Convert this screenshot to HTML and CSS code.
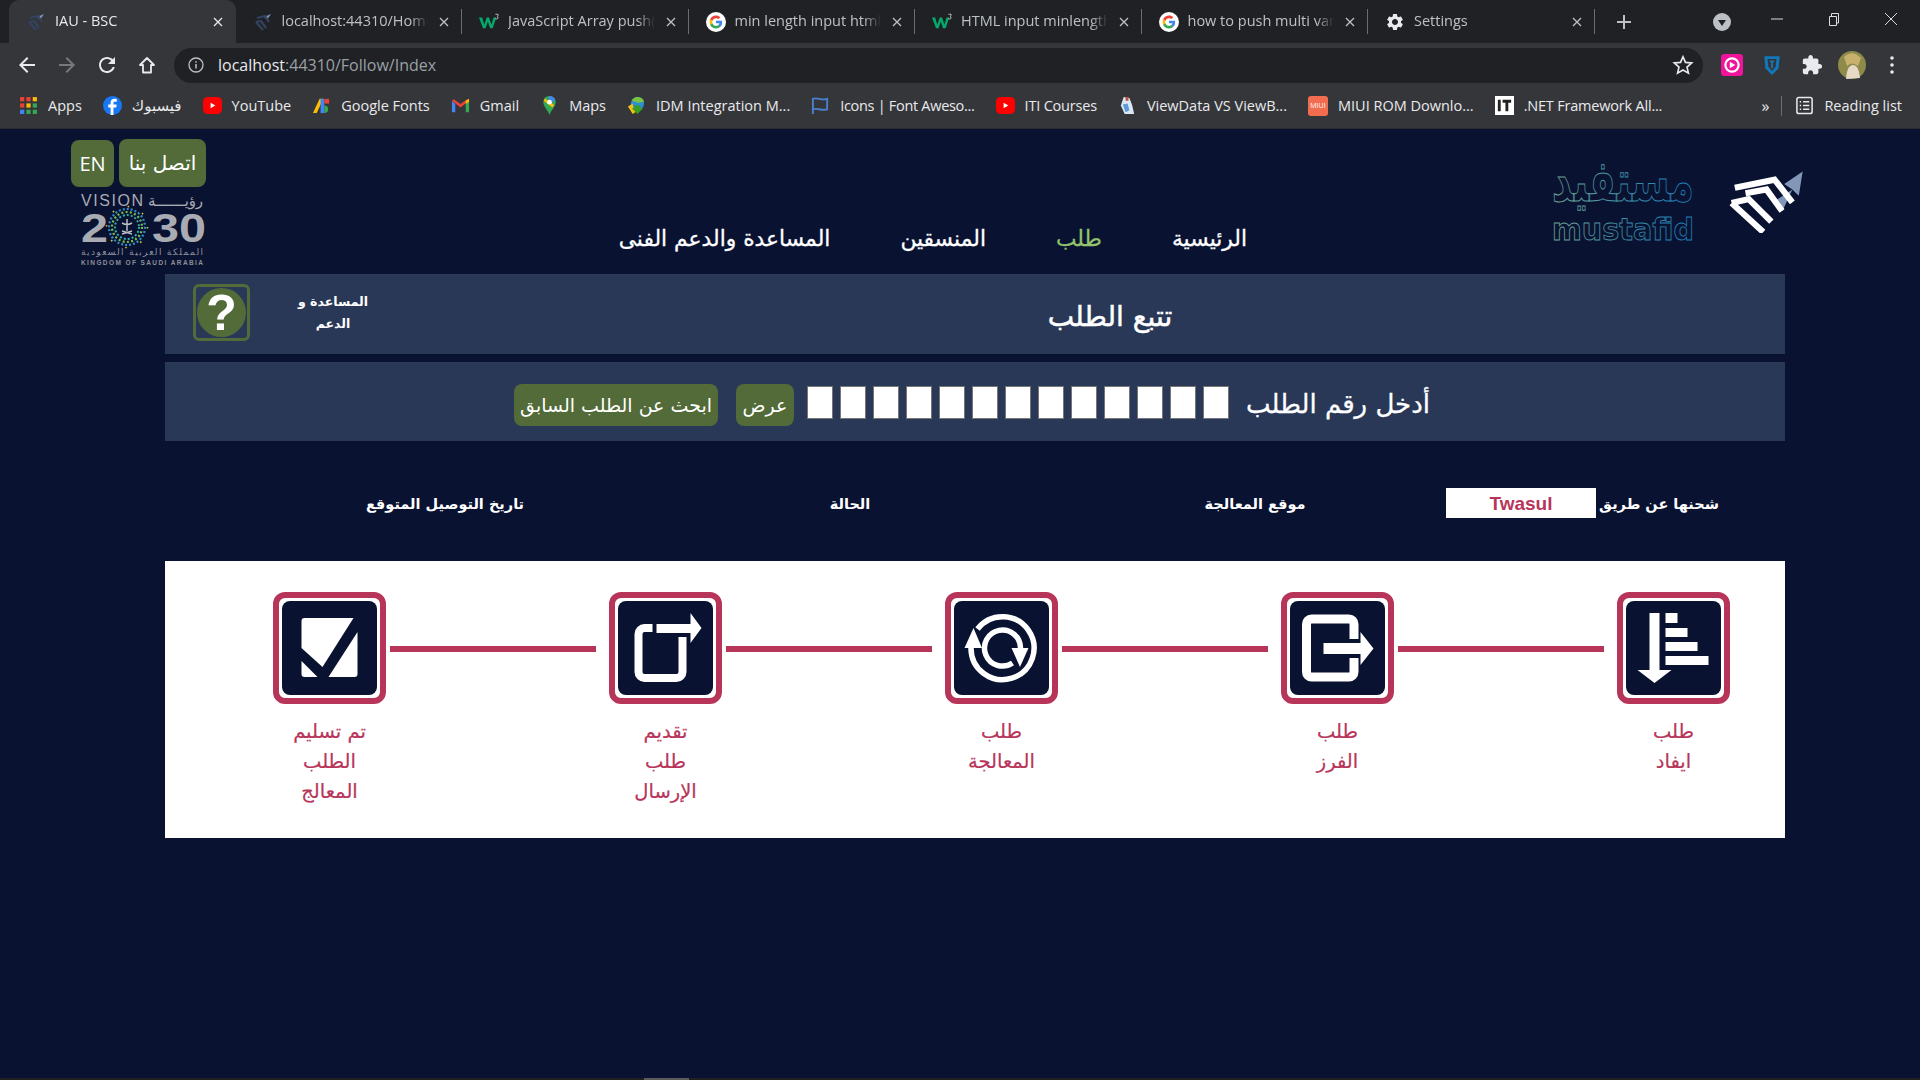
FILE: index.html
```html
<!DOCTYPE html>
<html lang="ar">
<head>
    <meta charset="UTF-8">
    <meta name="viewport" content="width=device-width, initial-scale=1.0">
    <title>IAU - BSC</title>
    <link rel="stylesheet" href="styles.css">
</head>
<body>
    <svg class="defs" width="0" height="0">
        <symbol id="i-x" viewBox="0 0 12 12"><path d="M2 2l8 8M10 2l-8 8" stroke="currentColor" stroke-width="1.3" fill="none"/></symbol>
        <symbol id="i-google" viewBox="0 0 24 24">
            <circle cx="12" cy="12" r="12" fill="#fff"/>
            <g transform="translate(3.6 3.6) scale(.7)">
                <path fill="#4285F4" d="M22.56 12.25c0-.78-.07-1.53-.2-2.25H12v4.26h5.92c-.26 1.37-1.04 2.53-2.21 3.31v2.77h3.57c2.08-1.92 3.28-4.74 3.28-8.09z"/>
                <path fill="#34A853" d="M12 23c2.97 0 5.46-.98 7.28-2.66l-3.57-2.77c-.98.66-2.23 1.06-3.71 1.06-2.86 0-5.29-1.93-6.16-4.53H2.18v2.84C3.99 20.53 7.7 23 12 23z"/>
                <path fill="#FBBC05" d="M5.84 14.09c-.22-.66-.35-1.36-.35-2.09s.13-1.43.35-2.09V7.07H2.18C1.43 8.55 1 10.22 1 12s.43 3.45 1.18 4.93l2.85-2.22.81-.62z"/>
                <path fill="#EA4335" d="M12 5.38c1.62 0 3.06.56 4.21 1.64l3.15-3.15C17.45 2.09 14.97 1 12 1 7.7 1 3.99 3.47 2.18 7.07l3.66 2.84c.87-2.6 3.3-4.53 6.16-4.53z"/>
            </g>
        </symbol>
        <symbol id="i-plane" viewBox="0 0 20 20">
            <path d="M18 2L11 5l3 3z" fill="#7f93b8"/>
            <path d="M4 6l8-2 4 6M3 10l5-1 5 7M3 10l7 8" stroke="#33425f" stroke-width="2.2" fill="none"/>
        </symbol>
        <symbol id="i-w3" viewBox="0 0 22 20">
            <path d="M0 5h3.500l2.300 8L8.500 5h2.500l2.700 8 2.200-8H19l-4 12h-2.800L9.700 9.500 7.200 17H4.400z" fill="#04aa6d"/>
            <path d="M18 1.500h3v1.500l-1.200 1c.8.2 1.200.7 1.200 1.300 0 1-.8 1.400-1.600 1.400-.6 0-1.200-.2-1.500-.5" fill="none" stroke="#e8eaed" stroke-width=".8"/>
        </symbol>
        <symbol id="i-yt" viewBox="0 0 20 20">
            <rect y="1" width="20" height="18" rx="5" fill="#f00"/>
            <path d="M8 7l5 3-5 3z" fill="#fff"/>
        </symbol>
    </svg>

    <!-- browser window top -->
    <div class="tabstrip">
        <div class="tab active">
            <svg class="tab-icon"><use href="#i-plane"/></svg>
            <span class="tab-title">IAU - BSC</span>
            <svg class="tab-close"><use href="#i-x"/></svg>
        </div>
        <div class="tab">
            <svg class="tab-icon"><use href="#i-plane"/></svg>
            <span class="tab-title">localhost:44310/Home/Index</span>
            <svg class="tab-close"><use href="#i-x"/></svg>
        </div>
        <div class="tab">
            <svg class="tab-icon"><use href="#i-w3"/></svg>
            <span class="tab-title">JavaScript Array push() Method</span>
            <svg class="tab-close"><use href="#i-x"/></svg>
        </div>
        <div class="tab">
            <svg class="tab-icon"><use href="#i-google"/></svg>
            <span class="tab-title">min length input html - Google</span>
            <svg class="tab-close"><use href="#i-x"/></svg>
        </div>
        <div class="tab">
            <svg class="tab-icon"><use href="#i-w3"/></svg>
            <span class="tab-title">HTML input minlength Attribute</span>
            <svg class="tab-close"><use href="#i-x"/></svg>
        </div>
        <div class="tab">
            <svg class="tab-icon"><use href="#i-google"/></svg>
            <span class="tab-title">how to push multi variables</span>
            <svg class="tab-close"><use href="#i-x"/></svg>
        </div>
        <div class="tab last">
            <svg class="tab-icon" viewBox="0 0 24 24"><path fill="#e8eaed" d="M19.14 12.94c.04-.3.06-.61.06-.94 0-.32-.02-.64-.07-.94l2.03-1.58c.18-.14.23-.41.12-.61l-1.92-3.32c-.12-.22-.37-.29-.59-.22l-2.39.96c-.5-.38-1.03-.7-1.62-.94l-.36-2.54c-.04-.24-.24-.41-.48-.41h-3.84c-.24 0-.43.17-.47.41l-.36 2.54c-.59.24-1.13.57-1.62.94l-2.39-.96c-.22-.08-.47 0-.59.22L2.74 8.87c-.12.21-.08.47.12.61l2.03 1.58c-.05.3-.09.63-.09.94s.02.64.07.94l-2.03 1.58c-.18.14-.23.41-.12.61l1.92 3.32c.12.22.37.29.59.22l2.39-.96c.5.38 1.03.7 1.62.94l.36 2.54c.05.24.24.41.48.41h3.84c.24 0 .44-.17.47-.41l.36-2.54c.59-.24 1.13-.56 1.62-.94l2.39.96c.22.08.47 0 .59-.22l1.92-3.32c.12-.22.07-.47-.12-.61l-2.01-1.58zM12 15.6c-1.98 0-3.6-1.62-3.6-3.6s1.62-3.6 3.6-3.6 3.6 1.62 3.6 3.6-1.62 3.6-3.6 3.6z"/></svg>
            <span class="tab-title">Settings</span>
            <svg class="tab-close"><use href="#i-x"/></svg>
        </div>
        <svg class="new-tab" viewBox="0 0 16 16"><path d="M8 1v14M1 8h14" stroke="#bdc1c6" stroke-width="2"/></svg>
        <svg class="tab-search" viewBox="0 0 18 18"><circle cx="9" cy="9" r="9" fill="#bdc1c6"/><path d="M5 7h8l-4 6z" fill="#202124"/></svg>
        <svg class="win-btn first" viewBox="0 0 14 14"><path d="M1 7h12" stroke="#dadce0" stroke-width="1"/></svg>
        <svg class="win-btn" viewBox="0 0 14 14"><path d="M2.500 4.500h7v9h-7zM4.500 4V1.500h7V11H10" stroke="#dadce0" fill="none"/></svg>
        <svg class="win-btn" viewBox="0 0 14 14"><path d="M1 1l12 12M13 1L1 13" stroke="#dadce0" stroke-width="1"/></svg>
    </div>

    <div class="toolbar">
        <svg class="tool" viewBox="0 0 24 24"><path fill="#e8eaed" d="M20 11H7.830l5.590-5.590L12 4l-8 8 8 8 1.410-1.410L7.830 13H20v-2z"/></svg>
        <svg class="tool" viewBox="0 0 24 24"><path fill="#75787d" d="M4 11h12.170l-5.590-5.590L12 4l8 8-8 8-1.410-1.410L16.170 13H4v-2z"/></svg>
        <svg class="tool" viewBox="0 0 24 24"><path fill="#e8eaed" d="M17.650 6.350C16.200 4.900 14.210 4 12 4c-4.420 0-7.990 3.580-7.990 8s3.570 8 7.990 8c3.730 0 6.840-2.550 7.730-6h-2.080c-.82 2.330-3.040 4-5.650 4-3.310 0-6-2.690-6-6s2.690-6 6-6c1.660 0 3.140.690 4.220 1.780L13 11h7V4l-2.350 2.350z"/></svg>
        <svg class="tool" viewBox="0 0 24 24"><path d="M12 5l-7 7h3v7.500h8V12h3z" fill="none" stroke="#e8eaed" stroke-width="1.800" stroke-linejoin="round"/></svg>
        <div class="omnibox">
            <svg class="info" viewBox="0 0 16 16"><circle cx="8" cy="8" r="7" fill="none" stroke="#bdc1c6" stroke-width="1.300"/><path d="M8 7v4.500M8 4.200v1.600" stroke="#bdc1c6" stroke-width="1.500"/></svg>
            <span class="url"><b>localhost</b>:44310/Follow/Index</span>
            <svg class="star" viewBox="0 0 24 24"><path d="M12 3l2.700 6.200 6.800.600-5.100 4.500 1.500 6.600L12 17.400 6.100 20.900l1.500-6.600L2.500 9.800l6.800-.600z" fill="none" stroke="#e8eaed" stroke-width="1.800"/></svg>
        </div>
        <svg class="ext pink" viewBox="0 0 20 20"><rect width="20" height="20" rx="3" fill="#f0149b"/><circle cx="10" cy="10" r="7" fill="#fff"/><circle cx="10" cy="10" r="5" fill="#f0149b"/><path d="M8 7l5 3-5 3z" fill="#fff"/></svg>
        <svg class="ext" viewBox="0 0 20 20"><path d="M3 2h14l-1 11-6 6-6-6z" fill="#1177bb"/><path d="M6 4.500h8l-.6 7L10 15.500 6.600 11.500z" fill="#35363a"/><path d="M8 6h4v1.500h-1.200V13H9.200V7.500H8z" fill="#1177bb"/></svg>
        <svg class="ext" viewBox="0 0 24 24"><path fill="#e8eaed" d="M20.500 11H19V7c0-1.100-.9-2-2-2h-4V3.500C13 2.120 11.880 1 10.500 1S8 2.120 8 3.500V5H4c-1.100 0-1.990.9-1.990 2v3.800H3.500c1.490 0 2.700 1.210 2.700 2.700s-1.210 2.700-2.700 2.700H2V20c0 1.100.9 2 2 2h3.800v-1.500c0-1.490 1.210-2.700 2.700-2.700 1.490 0 2.700 1.210 2.700 2.700V22H17c1.100 0 2-.9 2-2v-4h1.500c1.380 0 2.500-1.120 2.500-2.500S21.880 11 20.500 11z"/></svg>
        <svg class="avatar" viewBox="0 0 28 28"><circle cx="14" cy="14" r="14" fill="#8d8a4a"/><path d="M6 6q8-8 17 1l-3 8q-6-5-11 0z" fill="#c9b06c"/><path d="M8 28q1-14 7-14t7 13z" fill="#e6d9c6"/></svg>
        <svg class="dots" viewBox="0 0 4 18"><circle cx="2" cy="2" r="1.800" fill="#e8eaed"/><circle cx="2" cy="9" r="1.800" fill="#e8eaed"/><circle cx="2" cy="16" r="1.800" fill="#e8eaed"/></svg>
    </div>

    <div class="bookmarks">
        <span class="bm">
            <svg class="bm-icon" viewBox="0 0 18 18">
                <path d="M1 1h4v4H1z" fill="#ea4335"/><path d="M7 1h4v4H7z" fill="#ea4335"/><path d="M13 1h4v4h-4z" fill="#fbbc05"/>
                <path d="M1 7h4v4H1z" fill="#ea4335"/><path d="M7 7h4v4H7z" fill="#fbbc05"/><path d="M13 7h4v4h-4z" fill="#34a853"/>
                <path d="M1 13h4v4H1z" fill="#4285f4"/><path d="M7 13h4v4H7z" fill="#34a853"/><path d="M13 13h4v4h-4z" fill="#34a853"/>
            </svg>
            Apps
        </span>
        <span class="bm">
            <svg class="bm-icon" viewBox="0 0 20 20"><circle cx="10" cy="10" r="10" fill="#1877f2"/><path d="M11 20v-8h3l.4-3H11V7.500c0-.9.300-1.500 1.500-1.500h2V3.200C14 3.100 13 3 12 3 9.600 3 8 4.400 8 7v2H5.500v3H8v8z" fill="#fff"/></svg>
            <span class="ar-small">فيسبوك</span>
        </span>
        <span class="bm"><svg class="bm-icon"><use href="#i-yt"/></svg>YouTube</span>
        <span class="bm">
            <svg class="bm-icon" viewBox="0 0 20 20"><path d="M1 18L8 3h4L5 18z" fill="#fbbc05"/><path d="M9 18V3h4v15z" fill="#4285f4"/><path d="M13 3h5v5h-5z" fill="#ea4335"/><path d="M13 10a4 4 0 0 1 0 8z" fill="#34a853"/></svg>
            Google Fonts
        </span>
        <span class="bm">
            <svg class="bm-icon" viewBox="0 0 20 20"><path d="M1 5v12h3.500V8.500z" fill="#4285f4"/><path d="M19 5v12h-3.500V8.500z" fill="#34a853"/><path d="M1 5l9 7 9-7-2-1.500L10 8.500 3 3.500z" fill="#ea4335"/><path d="M15.500 8.500V5L19 3v3z" fill="#fbbc05"/></svg>
            Gmail
        </span>
        <span class="bm">
            <svg class="bm-icon" viewBox="0 0 20 20"><path d="M10 0c-4 0-6.500 3-6.500 6.500C3.500 11 8 14 10 20c2-6 6.500-9 6.500-13.500C16.500 3 14 0 10 0z" fill="#34a853"/><path d="M5 2.500L15 9.500 13 12 4 5z" fill="#fbbc05"/><path d="M10 0c3 0 5 1.500 6 4l-4 3-3-5z" fill="#4285f4"/><circle cx="10" cy="6.500" r="2.500" fill="#fff"/></svg>
            Maps
        </span>
        <span class="bm">
            <svg class="bm-icon" viewBox="0 0 20 20"><circle cx="11" cy="8" r="7" fill="#2d8fd0"/><path d="M5 5a7 7 0 0 1 13 1l-6 1z" fill="#7cc242"/><path d="M1 11l5-3 1 6 5 1-6 4z" fill="#f4c20d"/><path d="M8 10h6v3l3 0-6 6-6-6h3z" fill="#3a9d23"/></svg>
            IDM Integration M...
        </span>
        <span class="bm tight">
            <svg class="bm-icon" viewBox="0 0 20 20"><path d="M2 2v17M2 3c5-2 8 2 15 0v11c-7 2-10-2-15 0" fill="none" stroke="#4a7fcb" stroke-width="2"/></svg>
            Icons | Font Aweso...
        </span>
        <span class="bm narrow"><svg class="bm-icon"><use href="#i-yt"/></svg>ITI Courses</span>
        <span class="bm">
            <svg class="bm-icon" viewBox="0 0 20 20"><path d="M6 1l6 1 3 8 2 9H7L3 10z" fill="#dbe7f3"/><path d="M5 9l5-1 2 7-4 2z" fill="#5a9ad6"/><path d="M8 1h3v4H8z" fill="#c0503a"/></svg>
            ViewData VS ViewB...
        </span>
        <span class="bm">
            <span class="miui">MIUI</span>
            MIUI ROM Downlo...
        </span>
        <span class="bm narrow">
            <svg class="bm-icon" viewBox="0 0 20 20"><rect width="20" height="20" fill="#fff"/><path d="M3 4h3v12H3zM8 4h9v3h-3v9h-3V7H8z" fill="#222"/></svg>
            .NET Framework All...
        </span>
        <span class="bm-more">»</span>
        <span class="bm-sep"></span>
        <span class="bm reading">
            <svg class="bm-icon" viewBox="0 0 20 20"><rect x="2" y="1.500" width="16" height="17" rx="2" fill="none" stroke="#e8eaed" stroke-width="1.600"/><path d="M5 6h1.500M8.500 6H15M5 10h1.500M8.500 10H15M5 14h1.500M8.500 14H15" stroke="#e8eaed" stroke-width="1.500"/></svg>
            Reading list
        </span>
    </div>

    <!-- page -->
    <div class="page" dir="rtl">
        <header class="site-header">
            <div class="logos">
                <svg class="plane-logo" viewBox="685 55 230 195">
                    <path d="M912 60L855 98l25 17zM912 60l-12 75-20-20zM880 115l-30 65-30-25z" fill="#8296b8"/>
                    <path d="M702 110l123-25 55 70M735 127l65-12 48 67M692 157l53-12 70 70M692 157l98 90" fill="none" stroke="#fff" stroke-width="19"/>
                </svg>
                <svg class="mustafid-logo" viewBox="0 0 142 79">
                    <defs>
                        <linearGradient id="mg" x1="0" x2="1" y1="0" y2="0">
                            <stop offset="0" stop-color="#74a892"/>
                            <stop offset=".55" stop-color="#3a8fa8"/>
                            <stop offset="1" stop-color="#1a80bd"/>
                        </linearGradient>
                    </defs>
                    <text class="mustafid-ar" x="71" y="38" text-anchor="middle" direction="rtl" textLength="142" lengthAdjust="spacingAndGlyphs" stroke="url(#mg)">مستفيد</text>
                    <text class="mustafid-en" x="71" y="77" text-anchor="middle" direction="ltr" textLength="142" lengthAdjust="spacingAndGlyphs" stroke="url(#mg)">mustafid</text>
                </svg>
            </div>
            <nav class="main-nav">
                <a>الرئيسية</a>
                <a class="current">طلب</a>
                <a>المنسقين</a>
                <a>المساعدة والدعم الفنى</a>
            </nav>
            <div class="header-side">
                <div class="header-btns">
                    <a class="green-btn contact">اتصل بنا</a>
                    <a class="green-btn lang">EN</a>
                </div>
                <svg class="vision-logo" viewBox="0 0 125 76">
                    <text class="v-word" x="0" y="14" textLength="62" direction="ltr">VISION</text>
                    <text class="v-arabic" x="122" y="14" textLength="55">رؤيـــــــة</text>
                    <text class="v-num" x="0" y="50" textLength="27" lengthAdjust="spacingAndGlyphs" direction="ltr">2</text>
                    <text class="v-num" x="71" y="50" textLength="54" lengthAdjust="spacingAndGlyphs" direction="ltr">30</text>
                    <circle cx="46" cy="35" r="18" fill="none" stroke="#2f8fc4" stroke-width="2.200" stroke-dasharray="2 2"/>
                    <circle cx="46" cy="35" r="15" fill="none" stroke="#7cc04b" stroke-width="2.200" stroke-dasharray="2 2.300"/>
                    <circle cx="46" cy="35" r="12" fill="none" stroke="#2fb0a8" stroke-width="2" stroke-dasharray="2 2"/>
                    <circle cx="46" cy="35" r="20.500" fill="none" stroke="#d9c92f" stroke-width="1.600" stroke-dasharray="1.600 14.500"/>
                    <path d="M46 27v12M41 31q5 3 10 0M41 42l10-3M51 42l-10-3" stroke="#b9bcc4" stroke-width="1.500" fill="none"/>
                    <text class="v-ar-small" x="122" y="63" textLength="122">المملكة العربية السعودية</text>
                    <text class="v-en-small" x="0" y="73" textLength="122" direction="ltr">KINGDOM OF SAUDI ARABIA</text>
                </svg>
            </div>
        </header>

        <section class="panel title-panel">
            <h1>تتبع الطلب</h1>
            <div class="help-text">المساعدة و<br>الدعم</div>
            <div class="help-icon"><span>?</span></div>
        </section>

        <section class="panel search-panel">
            <label class="search-label" for="d1">أدخل رقم الطلب</label>
            <div class="digits">
                <input id="d1" maxlength="1"><input maxlength="1"><input maxlength="1"><input maxlength="1"><input maxlength="1"><input maxlength="1"><input maxlength="1"><input maxlength="1"><input maxlength="1"><input maxlength="1"><input maxlength="1"><input maxlength="1"><input maxlength="1">
            </div>
            <a class="green-btn show-btn">عرض</a>
            <a class="green-btn prev-btn">ابحث عن الطلب السابق</a>
        </section>

        <div class="info-row">
            <div class="info-cell shipped">
                <span>شحنها عن طريق</span>
                <span class="carrier">Twasul</span>
            </div>
            <div class="info-cell">موقع المعالجة</div>
            <div class="info-cell">الحالة</div>
            <div class="info-cell">تاريخ التوصيل المتوقع</div>
        </div>

        <section class="steps-card">
            <div class="step">
                <div class="step-icon">
                    <svg viewBox="0 0 94 94">
                        <path d="M23 12h10v57h12L28 82 11 69h12z" fill="#fff"/>
                        <path d="M39 12h12v10H39zM39 27h22v9H39zM39 41h32v9H39zM39 55h43v9H39z" fill="#fff"/>
                    </svg>
                </div>
                <div class="step-label">طلب<br>ايفاد</div>
            </div>
            <div class="connector"></div>
            <div class="step">
                <div class="step-icon">
                    <svg viewBox="0 0 94 94">
                        <path d="M63.500 38V23a5 5 0 0 0-5-5H21a5 5 0 0 0-5 5v48a5 5 0 0 0 5 5h37.500a5 5 0 0 0 5-5V57" fill="none" stroke="#fff" stroke-width="9"/>
                        <path d="M33 42h37V31l13 16.500L70 64V53H33z" fill="#fff"/>
                    </svg>
                </div>
                <div class="step-label">طلب<br>الفرز</div>
            </div>
            <div class="connector"></div>
            <div class="step">
                <div class="step-icon">
                    <svg viewBox="0 0 94 94">
                        <path d="M23 28A31.500 31.500 0 1 1 16.500 47" fill="none" stroke="#fff" stroke-width="5.500"/>
                        <path d="M19 27l8.500 20H10z" fill="#fff"/>
                        <path d="M66 47A18 18 0 1 0 58 62" fill="none" stroke="#fff" stroke-width="5.500"/>
                        <path d="M57 47h17l-8.500 19z" fill="#fff"/>
                    </svg>
                </div>
                <div class="step-label">طلب<br>المعالجة</div>
            </div>
            <div class="connector"></div>
            <div class="step">
                <div class="step-icon">
                    <svg viewBox="0 0 94 94">
                        <path d="M34 27H26a6 6 0 0 0-6 6v38a6 6 0 0 0 6 6h32a6 6 0 0 0 6-6V36" fill="none" stroke="#fff" stroke-width="8"/>
                        <path d="M38 23h34V12l11 15-11 15V32H38z" fill="#fff"/>
                    </svg>
                </div>
                <div class="step-label">تقديم<br>طلب<br>الإرسال</div>
            </div>
            <div class="connector"></div>
            <div class="step">
                <div class="step-icon">
                    <svg viewBox="0 0 94 94">
                        <path d="M22 17h49L40 66 19 47V20a3 3 0 0 1 3-3z" fill="#fff"/>
                        <path d="M75 31v42a3 3 0 0 1-3 3H46z" fill="#fff"/>
                        <path d="M19 60l16 16H22a3 3 0 0 1-3-3z" fill="#fff"/>
                    </svg>
                </div>
                <div class="step-label">تم تسليم<br>الطلب<br>المعالج</div>
            </div>
        </section>
    </div>

    <div class="taskbar"><span class="task-thumb"></span></div>
</body>
</html>
```

FILE: styles.css
```css
* {
    margin: 0;
    padding: 0;
    box-sizing: border-box;
}

html, body {
    height: 1080px;
    overflow: hidden;
}

body {
    display: flex;
    flex-direction: column;
    background: #0a1232;
    font-family: 'Open Sans', 'Noto Sans', sans-serif;
}

.defs {
    position: absolute;
}

/* Browser tabs */
.tabstrip {
    height: 43px;
    flex: none;
    display: flex;
    align-items: center;
    padding-left: 9px;
    background: #202124;
    color: #bdc1c6;
    font-size: 14.500px;
}

.tab {
    width: 226.500px;
    height: 43px;
    flex: none;
    display: flex;
    align-items: center;
    padding: 0 12px 0 17px;
    position: relative;
}

.tab::after {
    content: '';
    position: absolute;
    right: 0;
    top: 9px;
    bottom: 9px;
    width: 1px;
    background: #6b6d70;
}

.tab.active {
    background: #35363a;
    border-radius: 10px 10px 0 0;
    color: #e8eaed;
}

.tab.active::after {
    display: none;
}

.tab-icon {
    width: 20px;
    height: 20px;
    flex: none;
}

.tab-title {
    width: 147px;
    margin-left: 9px;
    padding-bottom: 2px;
    white-space: nowrap;
    overflow: hidden;
    -webkit-mask-image: linear-gradient(90deg, #000 88%, transparent);
    mask-image: linear-gradient(90deg, #000 88%, transparent);
}

.tab-close {
    width: 12px;
    height: 12px;
    margin-left: 10px;
    flex: none;
}

.new-tab {
    width: 16px;
    height: 16px;
    margin-left: 21px;
    flex: none;
}

.tab-search {
    width: 18px;
    height: 18px;
    margin-left: 81px;
    flex: none;
}

.win-btn {
    width: 14px;
    height: 14px;
    margin-left: 43px;
    margin-top: -6px;
    flex: none;
}

.win-btn.first {
    margin-left: 39px;
}

/* Toolbar */
.toolbar {
    height: 44px;
    flex: none;
    display: flex;
    align-items: center;
    padding-left: 15px;
    background: #35363a;
}

.tool {
    width: 24px;
    height: 24px;
    margin-right: 16px;
    flex: none;
}

.omnibox {
    width: 1529px;
    height: 35px;
    margin-left: -1px;
    display: flex;
    align-items: center;
    padding: 0 9px 0 14px;
    border-radius: 18px;
    background: #202124;
    flex: none;
}

.info {
    width: 16px;
    height: 16px;
    flex: none;
}

.url {
    margin-left: 14px;
    flex: 1;
    color: #9aa0a6;
    font-size: 16px;
    white-space: nowrap;
}

.url b {
    color: #e8eaed;
    font-weight: 400;
}

.star {
    width: 22px;
    height: 22px;
    flex: none;
}

.ext {
    width: 22px;
    height: 22px;
    margin-left: 18px;
    flex: none;
}

.avatar {
    width: 28px;
    height: 28px;
    margin-left: 15px;
    flex: none;
}

.dots {
    width: 4px;
    height: 18px;
    margin-left: 24px;
    flex: none;
}

/* Bookmarks */
.bookmarks {
    height: 42px;
    flex: none;
    display: flex;
    align-items: center;
    gap: 21px;
    padding: 0 18px 4px 19px;
    background: #35363a;
    border-bottom: 1px solid #2a2b2e;
    color: #e8eaed;
    font-size: 14.500px;
    white-space: nowrap;
}

.bm {
    display: flex;
    align-items: center;
    gap: 10px;
}

.bm.tight {
    letter-spacing: -.3px;
}

.bm.narrow {
    letter-spacing: -.2px;
}

.bm-icon {
    width: 19px;
    height: 19px;
    flex: none;
}

.ar-small {
    font-family: 'DejaVu Sans', sans-serif;
    font-size: 15px;
}

.miui {
    width: 20px;
    height: 20px;
    flex: none;
    display: flex;
    align-items: center;
    justify-content: center;
    border-radius: 3px;
    background: #f26d4f;
    font-size: 7px;
    color: #fff;
}

.bm-more {
    margin-left: auto;
    font-size: 16px;
}

.bm-sep {
    width: 1px;
    height: 20px;
    margin-left: -9px;
    background: #6b6d70;
}

.bm.reading {
    margin-left: -8px;
}

/* Page */
.page {
    flex: 1;
    font-family: 'DejaVu Sans', sans-serif;
    color: #fff;
}

.site-header {
    height: 145px;
    display: flex;
    padding-inline: 116px 71px;
}

.logos {
    width: 252px;
    height: 80px;
    margin-top: 34px;
    display: flex;
    justify-content: space-between;
    flex: none;
}

.plane-logo {
    width: 75px;
    height: 63px;
    margin-top: 7px;
}

.mustafid-logo {
    width: 142px;
    height: 79px;
    overflow: visible;
}

.mustafid-ar {
    font-size: 58px;
    font-weight: 700;
    fill: none;
    stroke-width: 1;
}

.mustafid-en {
    font-size: 30px;
    font-weight: 700;
    fill: none;
    stroke-width: .8;
}

.main-nav {
    display: flex;
    gap: 70px;
    margin-inline-start: 305px;
    padding-top: 94px;
    font-size: 21.800px;
    line-height: 32px;
    white-space: nowrap;
    -webkit-text-stroke: .3px;
}

.main-nav .current {
    color: #93c36c;
}

.header-side {
    margin-inline-start: auto;
    width: 135px;
    flex: none;
    padding-top: 10px;
}

.header-btns {
    display: flex;
    gap: 5px;
}

.green-btn {
    display: flex;
    align-items: center;
    justify-content: center;
    background: #526b38;
    color: #fff;
    border-radius: 8px;
    white-space: nowrap;
}

.contact {
    width: 87px;
    height: 48px;
    font-size: 20px;
}

.lang {
    width: 43px;
    height: 47px;
    margin-top: 1px;
    font-family: 'Open Sans', sans-serif;
    font-size: 20px;
}

.vision-logo {
    display: block;
    width: 125px;
    height: 76px;
    margin-top: 5px;
    fill: #a9abb3;
}

.v-word {
    font-family: 'Liberation Sans', sans-serif;
    font-size: 16px;
}

.v-arabic {
    font-size: 15px;
}

.v-num {
    font-family: 'Liberation Sans', sans-serif;
    font-size: 40px;
    font-weight: 700;
}

.v-ar-small {
    font-size: 9px;
    fill: #8d8f98;
}

.v-en-small {
    font-family: 'Liberation Sans', sans-serif;
    font-size: 6.500px;
    font-weight: 700;
    fill: #8d8f98;
}

.panel {
    margin-inline: 135px 165px;
    background: #2a3858;
    display: flex;
    align-items: center;
}

.title-panel {
    height: 80px;
}

.title-panel h1 {
    width: 1350px;
    flex: none;
    padding-top: 4px;
    text-align: center;
    font-size: 28px;
    font-weight: 400;
    -webkit-text-stroke: .5px;
}

.help-text {
    width: 185px;
    flex: none;
    padding-inline-start: 19px;
    padding-bottom: 2px;
    text-align: center;
    font-size: 12.500px;
    font-weight: 700;
    line-height: 22px;
}

.help-icon {
    width: 57px;
    height: 57px;
    flex: none;
    margin-bottom: 4px;
    display: flex;
    align-items: center;
    justify-content: center;
    border: 3px solid #526b38;
    border-radius: 6px;
}

.help-icon span {
    width: 49px;
    height: 49px;
    display: block;
    border-radius: 50%;
    background: #526b38;
    text-align: center;
    font-family: 'Liberation Sans', sans-serif;
    font-size: 50px;
    font-weight: 700;
    line-height: 50px;
}

.search-panel {
    height: 79px;
    margin-top: 8px;
    padding-inline-start: 355px;
}

.search-label {
    width: 201px;
    flex: none;
    padding-top: 4px;
    font-size: 26px;
    font-weight: 400;
    white-space: nowrap;
    -webkit-text-stroke: .3px;
}

.digits {
    display: flex;
    gap: 7px;
    width: 423px;
    flex: none;
    margin-top: 2px;
}

.digits input {
    width: 26px;
    height: 33px;
    flex: none;
    border: 1px solid #767676;
    background: #fff;
}

.show-btn {
    width: 58px;
    height: 42px;
    margin-inline-start: 12px;
    margin-top: 7px;
    font-size: 19px;
    flex: none;
}

.prev-btn {
    width: 204px;
    height: 42px;
    margin-inline-start: 18px;
    margin-top: 7px;
    font-size: 19px;
    flex: none;
}

.info-row {
    display: grid;
    grid-template-columns: 273px 382px 428px 382px;
    margin-top: 47px;
    padding-inline-start: 201px;
    height: 30px;
    align-items: center;
    font-size: 14.500px;
    font-weight: 700;
    text-align: center;
}

.info-cell {
    padding-top: 2px;
}

.shipped {
    display: flex;
    justify-content: space-between;
    align-items: center;
    white-space: nowrap;
    padding-top: 0;
}

.shipped > span:first-child {
    padding-top: 2px;
}

.carrier {
    width: 150px;
    height: 30px;
    background: #fff;
    color: #b8355a;
    font-family: 'Liberation Sans', sans-serif;
    font-size: 19px;
    line-height: 32px;
}

.steps-card {
    margin-inline: 135px 165px;
    margin-top: 43px;
    height: 277px;
    padding-top: 31px;
    padding-inline-start: 55px;
    display: flex;
    align-items: flex-start;
    background: #fff;
}

.step {
    width: 113px;
    flex: none;
    display: flex;
    flex-direction: column;
    align-items: center;
}

.step-icon {
    width: 113px;
    height: 112px;
    padding: 3px;
    border: 6px solid #b8355a;
    border-radius: 12px;
    background: #fff;
}

.step-icon svg {
    display: block;
    width: 95px;
    height: 94px;
    background: #0a1232;
    border-radius: 8px;
}

.step-label {
    margin-top: 13px;
    white-space: nowrap;
    color: #b8355a;
    font-size: 19.500px;
    line-height: 30px;
    text-align: center;
    -webkit-text-stroke: .2px;
}

.connector {
    width: 206px;
    height: 6px;
    flex: none;
    margin-top: 54px;
    margin-inline: 13px 4px;
    background: #b8355a;
}

.taskbar {
    position: absolute;
    left: 0;
    right: 0;
    bottom: 0;
    height: 2px;
    background: #202020;
}

.task-thumb {
    display: block;
    width: 45px;
    height: 2px;
    margin-left: 644px;
    background: #5c5c5c;
}
```
